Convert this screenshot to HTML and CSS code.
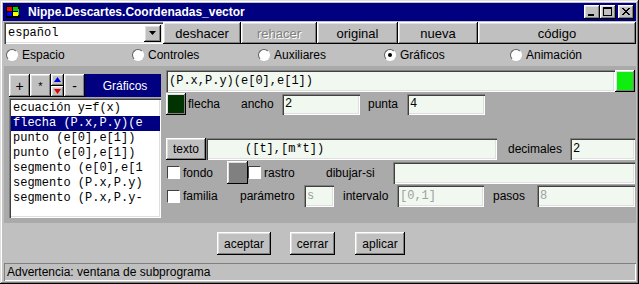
FILE: index.html
```html
<!DOCTYPE html>
<html lang="es">
<head>
  <meta charset="UTF-8">
  <title>Nippe.Descartes.Coordenadas_vector</title>
  <link rel="stylesheet" href="styles.css">
</head>
<body>

  <div class="window">

    <!-- Title bar -->
    <div class="titlebar">
      <svg class="app-icon" width="16" height="14" viewBox="0 0 16 14">
        <rect x="1" y="1" width="14" height="12" fill="#000"/>
        <rect x="2" y="2" width="5" height="4" fill="#f00"/>
        <rect x="8" y="2" width="5" height="4" fill="#0c0"/>
        <rect x="2" y="7" width="5" height="4" fill="#00f"/>
        <rect x="8" y="7" width="5" height="4" fill="#ff0"/>
        <rect x="13" y="4" width="1" height="6" fill="#0cc"/>
      </svg>
      <span class="title">Nippe.Descartes.Coordenadas_vector</span>
      <div class="win-ctrls">
        <span class="ctrl"><svg width="16" height="14" viewBox="0 0 16 14"><rect x="4" y="9" width="6" height="2" fill="#000"/></svg></span>
        <span class="ctrl"><svg width="16" height="14" viewBox="0 0 16 14"><rect x="3.5" y="2.5" width="8" height="8" fill="none" stroke="#000"/><rect x="3" y="2" width="9" height="2" fill="#000"/></svg></span>
        <span class="ctrl close"><svg width="16" height="14" viewBox="0 0 16 14"><path d="M4 3 L11 10 M5 3 L12 10 M11 3 L4 10 M12 3 L5 10" stroke="#000" stroke-width="1"/></svg></span>
      </div>
    </div>

    <div class="content">

      <!-- Top toolbar -->
      <div class="toolbar">
        <div class="select">
          <span class="select-text">español</span>
          <span class="select-arrow"><svg width="9" height="5" viewBox="0 0 9 5"><path d="M1 0 H8 L4.5 4 Z" fill="#000"/></svg></span>
        </div>
        <button class="btn tool w-deshacer">deshacer</button>
        <button class="btn tool w-rehacer disabled">rehacer</button>
        <button class="btn tool w-original">original</button>
        <button class="btn tool w-nueva">nueva</button>
        <button class="btn tool w-codigo">código</button>
      </div>

      <!-- Section radios -->
      <div class="tabs">
        <div class="radio"><span class="circle"></span>Espacio</div>
        <div class="radio"><span class="circle"></span>Controles</div>
        <div class="radio"><span class="circle"></span>Auxiliares</div>
        <div class="radio"><span class="circle checked"></span>Gráficos</div>
        <div class="radio"><span class="circle"></span>Animación</div>
      </div>

      <!-- Editor panel -->
      <div class="panel">
        <div class="left">
          <div class="list-tools">
            <button class="btn sq">+</button>
            <button class="btn sq star">*</button>
            <div class="updown">
              <span class="btn half"><svg width="7" height="5" viewBox="0 0 7 5"><path d="M3.5 0 L7 5 H0 Z" fill="#0000e0"/></svg></span>
              <span class="btn half"><svg width="7" height="5" viewBox="0 0 7 5"><path d="M0 0 H7 L3.5 5 Z" fill="#e00000"/></svg></span>
            </div>
            <button class="btn sq">-</button>
            <div class="list-title">Gráficos</div>
          </div>
          <ul class="list">
            <li>ecuación y=f(x)</li>
            <li class="selected">flecha (P.x,P.y)(e</li>
            <li>punto (e[0],e[1])</li>
            <li>punto (e[0],e[1])</li>
            <li>segmento (e[0],e[1</li>
            <li>segmento (P.x,P.y)</li>
            <li>segmento (P.x,P.y-</li>
          </ul>
        </div>

        <div class="right">
          <div class="row row-a">
            <div class="field mono w-expr">(P.x,P.y)(e[0],e[1])</div>
            <div class="swatch green"></div>
          </div>

          <div class="row row-b">
            <div class="swatch dark"></div>
            <span class="lbl w-flecha">flecha</span>
            <span class="lbl w-ancho">ancho</span>
            <div class="field mono w-78">2</div>
            <span class="lbl w-punta">punta</span>
            <div class="field mono w-78">4</div>
          </div>

          <div class="row row-c">
            <button class="btn w-texto">texto</button>
            <div class="field mono w-texto-field">     ([t],[m*t])</div>
            <span class="lbl w-decimales">decimales</span>
            <div class="field mono w-dec">2</div>
          </div>

          <div class="row row-d">
            <div class="check-group w-fondo"><span class="checkbox"></span>fondo</div>
            <div class="swatch gray"></div>
            <div class="check-group w-rastro"><span class="checkbox"></span>rastro</div>
            <span class="lbl w-dibujar">dibujar-si</span>
            <div class="field mono w-dibujar-field"></div>
          </div>

          <div class="row row-e">
            <div class="check-group w-familia"><span class="checkbox"></span>familia</div>
            <span class="lbl w-parametro">parámetro</span>
            <div class="field mono off w-param">s</div>
            <span class="lbl w-intervalo">intervalo</span>
            <div class="field mono off w-intervalo-field">[0,1]</div>
            <span class="lbl w-pasos">pasos</span>
            <div class="field mono off w-pasos-field">8</div>
          </div>
        </div>
      </div>

      <!-- Dialog buttons -->
      <div class="actions">
        <button class="btn act w-aceptar">aceptar</button>
        <button class="btn act w-cerrar">cerrar</button>
        <button class="btn act w-aplicar">aplicar</button>
      </div>

      <!-- Status bar -->
      <div class="status">Advertencia: ventana de subprograma</div>

    </div>
  </div>

</body>
</html>
```

FILE: styles.css
```css
/* Reset & window frame */
* {
  margin: 0;
  padding: 0;
  box-sizing: border-box;
}
body {
  font-family: "Liberation Sans", Arial, sans-serif;
  font-size: 12px;
  color: #000;
  background-color: #c0c0c0;
}
.window {
  width: 639px;
  height: 284px;
  padding: 3px;
  background-color: #c0c0c0;
  box-shadow: inset -1px -1px #000, inset 1px 1px #dfdfdf, inset -2px -2px #808080, inset 2px 2px #fff;
  display: flex;
  flex-direction: column;
}

/* Title bar */
.titlebar {
  height: 18px;
  margin-bottom: 1px;
  background-color: #000080;
  color: #fff;
  display: flex;
  align-items: center;
  padding-left: 2px;
}
.app-icon {
  margin-right: 7px;
}
.title {
  font-weight: bold;
  font-size: 12px;
}
.win-ctrls {
  margin-left: auto;
  display: flex;
  margin-right: 2px;
}
.ctrl {
  width: 16px;
  height: 14px;
  background-color: #c0c0c0;
  box-shadow: inset -1px -1px #000, inset 1px 1px #fff, inset -2px -2px #808080, inset 2px 2px #dfdfdf;
  display: flex;
}
.ctrl.close {
  margin-left: 2px;
}

.content {
  padding-left: 1px;
  display: flex;
  flex-direction: column;
}

/* Generic raised button */
.btn {
  background-color: #c0c0c0;
  border: none;
  box-shadow: inset -1px -1px #000, inset 1px 1px #fff, inset -2px -2px #808080, inset 2px 2px #dfdfdf;
  font-family: "Liberation Sans", Arial, sans-serif;
  font-size: 12px;
  color: #000;
  display: flex;
  align-items: center;
  justify-content: center;
}

/* Sunken text field */
.field {
  height: 22px;
  background-color: #f0f8f0;
  box-shadow: inset 1px 1px #808080, inset 2px 2px #404040, inset -1px -1px #fff, inset -2px -2px #dfdfdf;
  padding-left: 3px;
  line-height: 22px;
  white-space: pre;
  overflow: hidden;
}
.mono {
  font-family: "Liberation Mono", "Courier New", monospace;
  font-size: 12px;
}
.field.off {
  color: #a0a0a0;
}

/* Top toolbar */
.toolbar {
  display: flex;
  height: 22px;
}
.select {
  width: 159px;
  height: 22px;
  background-color: #fff;
  box-shadow: inset 1px 1px #808080, inset 2px 2px #404040, inset -1px -1px #fff, inset -2px -2px #dfdfdf;
  display: flex;
  align-items: center;
  padding: 0 2px 0 4px;
}
.select-text {
  font-family: "Liberation Mono", "Courier New", monospace;
  font-size: 12px;
  flex: 1;
}
.select-arrow {
  width: 17px;
  height: 17px;
  background-color: #c0c0c0;
  box-shadow: inset -1px -1px #000, inset 1px 1px #fff, inset -2px -2px #808080, inset 2px 2px #dfdfdf;
  display: flex;
  align-items: center;
  justify-content: center;
}
.tool {
  font-size: 13px;
  height: 22px;
}
.tool.disabled {
  color: #808080;
  text-shadow: 1px 1px #fff;
}
.w-deshacer { width: 78px; }
.w-rehacer { width: 76px; }
.w-original { width: 81px; }
.w-nueva { width: 80px; }
.w-codigo { width: 158px; }

/* Radios */
.tabs {
  height: 22px;
  display: grid;
  grid-template-columns: repeat(5, 126px);
  padding-left: 2px;
  align-items: center;
}
.radio {
  display: flex;
  align-items: center;
  font-size: 12px;
}
.circle {
  width: 12px;
  height: 12px;
  border-radius: 50%;
  background-color: #fff;
  border: 1px solid;
  border-color: #606060 #fff #fff #606060;
  margin-right: 4px;
  display: flex;
  align-items: center;
  justify-content: center;
}
.circle.checked::after {
  content: "";
  width: 4px;
  height: 4px;
  border-radius: 50%;
  background-color: #000;
}

/* Editor panel */
.panel {
  height: 157px;
  background-color: #aaaaaa;
  display: flex;
  padding-left: 5px;
}
.left {
  width: 152px;
  padding-top: 8px;
}
.list-tools {
  display: flex;
  height: 23px;
}
.sq {
  width: 21px;
  height: 23px;
  font-size: 14px;
}
.sq.star {
  font-size: 11px;
}
.updown {
  width: 13px;
  display: flex;
  flex-direction: column;
}
.half {
  height: 11px;
  flex: 1;
}
.list-title {
  flex: 1;
  background-color: #000080;
  color: #fff;
  font-size: 12px;
  display: flex;
  align-items: center;
  justify-content: center;
  padding-left: 4px;
}
.list {
  list-style: none;
  height: 120px;
  margin-top: 1px;
  background-color: #fff;
  box-shadow: inset 1px 1px #808080, inset 2px 2px #404040, inset -1px -1px #fff, inset -2px -2px #dfdfdf;
  padding: 3px 1px 0 2px;
  font-family: "Liberation Mono", "Courier New", monospace;
  font-size: 12px;
}
.list li {
  height: 15px;
  line-height: 15px;
  padding-left: 2px;
  white-space: pre;
  overflow: hidden;
}
.list li.selected {
  background-color: #000080;
  color: #fff;
}

.right {
  width: 469px;
  margin-left: 5px;
  padding-top: 4px;
}
.row {
  display: flex;
  align-items: center;
  height: 22px;
}
.row-b { margin-top: 1px; }
.row-c { margin-top: 23px; }
.row-d { margin-top: 1px; height: 23px; }
.row-e { margin-top: 1px; }

.lbl {
  font-size: 12px;
  white-space: nowrap;
}
.swatch {
  width: 20px;
  height: 22px;
  box-shadow: inset -1px -1px #000, inset 1px 1px #fff, inset -2px -2px #808080, inset 2px 2px #dfdfdf;
}
.swatch.green { background-color: #10ee10; }
.swatch.dark { background-color: #003300; }
.swatch.gray {
  width: 21px;
  height: 23px;
  background-color: #808080;
}

.checkbox {
  width: 13px;
  height: 13px;
  background-color: #fff;
  border: 1px solid;
  border-color: #404040 #fff #fff #404040;
  margin-right: 3px;
}
.check-group {
  display: flex;
  align-items: center;
  font-size: 12px;
  padding-left: 1px;
}

.w-expr { width: 449px; }
.w-flecha { width: 55px; padding-left: 2px; }
.w-ancho { width: 41px; }
.w-78 { width: 78px; height: 21px; line-height: 21px; }
.w-punta { width: 47px; padding-left: 8px; }
.w-texto { width: 40px; height: 22px; }
.w-texto-field { width: 291px; }
.w-decimales { width: 73px; padding-left: 11px; }
.w-dec { width: 65px; }
.w-fondo { width: 61px; }
.w-rastro { width: 78px; padding-left: 0; }
.w-dibujar { width: 67px; }
.w-dibujar-field { width: 242px; }
.w-familia { width: 74px; }
.w-parametro { width: 64px; }
.w-param { width: 30px; }
.w-intervalo { width: 63px; padding-left: 9px; }
.w-intervalo-field { width: 87px; }
.w-pasos { width: 53px; padding-left: 9px; }
.w-pasos-field { width: 98px; }

/* Dialog buttons */
.actions {
  height: 40px;
  display: flex;
  align-items: flex-start;
  padding-top: 9px;
  padding-left: 213px;
}
.act {
  height: 23px;
}
.w-aceptar { width: 54px; }
.w-cerrar { width: 45px; margin-left: 19px; }
.w-aplicar { width: 50px; margin-left: 20px; }

/* Status bar */
.status {
  height: 18px;
  line-height: 18px;
  padding-left: 3px;
  box-shadow: inset 1px 1px #808080, inset -1px -1px #fff;
  font-size: 12px;
}
```
